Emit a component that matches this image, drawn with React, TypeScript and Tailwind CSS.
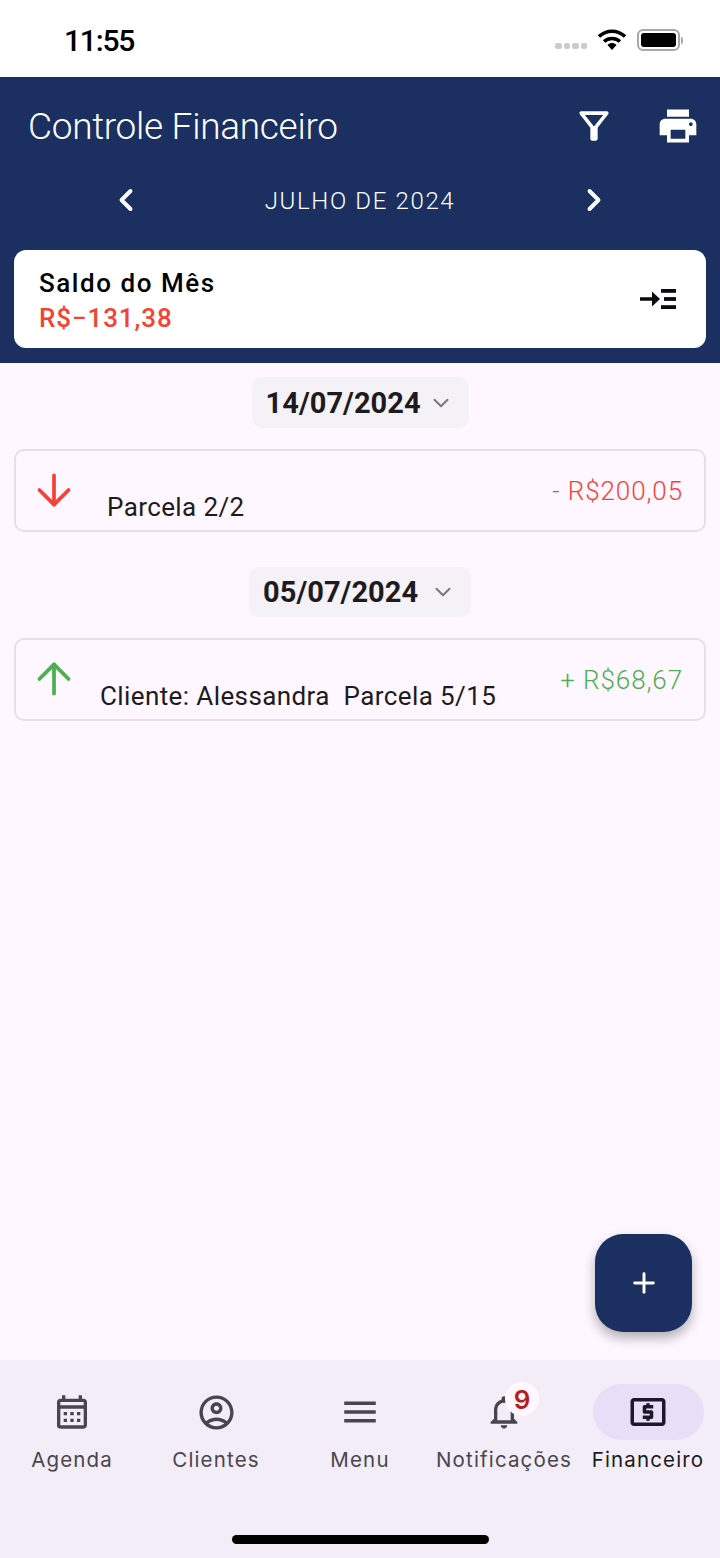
import { ArrowDown, ArrowUp, ChevronDown, ChevronLeft, ChevronRight, Plus } from "lucide-react";
import {
  MdMenu,
  MdOutlineAccountCircle,
  MdOutlineCalendarMonth,
  MdOutlineFilterAlt,
  MdOutlineLocalAtm,
  MdOutlineNotifications,
  MdPrint,
} from "react-icons/md";

function StatusBar() {
  return (
    <div className="h-[77px] shrink-0 bg-white flex items-center justify-between pl-[64px] pr-[37px] pt-[3px]">
      <span className="text-[30px] font-medium text-black tracking-[-1.2px] font-['Roboto',sans-serif]">11:55</span>
      <div className="flex items-center">
        <div className="flex gap-[2px] mt-[12px] mr-[11px]">
          <span className="w-[6.5px] h-[6px] rounded-[2px] bg-[#cccccc]" />
          <span className="w-[6.5px] h-[6px] rounded-[2px] bg-[#cccccc]" />
          <span className="w-[6.5px] h-[6px] rounded-[2px] bg-[#cccccc]" />
          <span className="w-[6.5px] h-[6px] rounded-[2px] bg-[#cccccc]" />
        </div>
        <svg width="28" height="22" viewBox="0 0 28 22" className="mr-[11px]">
          <path d="M1 7.5 C8.5 0.5 19.5 0.5 27 7.5" fill="none" stroke="#000" strokeWidth="3.4" />
          <path d="M6 12.5 C10.5 8.5 17.5 8.5 22 12.5" fill="none" stroke="#000" strokeWidth="3.4" />
          <path d="M9.5 16 C12.5 13.4 15.5 13.4 18.5 16 L14 21 Z" fill="#000" />
        </svg>
        <div className="w-[43px] h-[22px] rounded-[6px] border-2 border-[#a8a8a8] p-[2px]">
          <div className="w-full h-full rounded-[3px] bg-black" />
        </div>
        <div className="w-[2px] h-[7px] ml-[1px] rounded-r-sm bg-[#a8a8a8]" />
      </div>
    </div>
  );
}

function Header() {
  return (
    <header className="shrink-0 bg-[#1b3060] pb-[15px] text-white font-['Roboto',sans-serif]">
      <div className="h-[98px] flex items-center justify-between pl-[28px] pr-[20px]">
        <h1 className="text-[37px] font-light tracking-[-0.3px] pt-[2px]">Controle Financeiro</h1>
        <div className="flex items-center gap-[40px]">
          <MdOutlineFilterAlt size={44} />
          <MdPrint size={44} />
        </div>
      </div>
      <div className="h-[50px] flex items-center justify-between px-[108px]">
        <ChevronLeft size={36} strokeWidth={2.6} />
        <span className="text-[24px] font-light tracking-[1.65px] pt-[1px]">JULHO DE 2024</span>
        <ChevronRight size={36} strokeWidth={2.6} />
      </div>
      <div className="mt-[25px] mx-[14px] h-[98px] rounded-[12px] bg-white flex items-center justify-between pl-[25px] pr-[30px]">
        <div className="flex flex-col gap-[3px] pt-[2px]">
          <span className="text-[26px] leading-[32px] font-medium tracking-[1.55px] text-black">Saldo do Mês</span>
          <span className="text-[26px] leading-[32px] font-medium tracking-[0.9px] text-[#f44336]">R$−131,38</span>
        </div>
        <svg width="36" height="24" viewBox="0 0 36 24" fill="#0b0b12">
          <path d="M0 10.2h12V4.5l8 7.5-8 7.5v-5.7H0z" />
          <rect x="21" y="2" width="15" height="3.8" />
          <rect x="24" y="10.1" width="12" height="3.8" />
          <rect x="21" y="18.2" width="15" height="3.8" />
        </svg>
      </div>
    </header>
  );
}

function DateChip({ date, width, height }: { date: string; width: string; height: string }) {
  return (
    <div className={`${width} ${height} rounded-[10px] bg-[#f5f2f7] flex items-center justify-between pl-[14px] pr-[15px] font-['Roboto',sans-serif]`}>
      <span className="text-[29px] font-bold tracking-[0.05px] pt-[2px] text-[#1d1b20]">{date}</span>
      <ChevronDown size={26} strokeWidth={1.8} className="text-[#79747e]" />
    </div>
  );
}

function Entry({ up, text, amount, textLeft }: { up: boolean; text: string; amount: string; textLeft: string }) {
  const color = up ? "text-[#4caf50]" : "text-[#f44336]";
  return (
    <div className="mx-[14px] h-[83px] rounded-[10px] border-2 border-[#e4e1e6] flex justify-between pl-[13px] pr-[21px] font-['Roboto',sans-serif]">
      <div className="flex">
        <div className={`pt-[14px] ${color}`}>
          {up ? <ArrowUp size={50} strokeWidth={1.8} /> : <ArrowDown size={50} strokeWidth={1.8} />}
        </div>
        <span className={`${textLeft} pt-[40px] text-[26px] leading-[32px] tracking-[0.4px] text-[#1d1b20] whitespace-pre`}>{text}</span>
      </div>
      <span className={`pt-[24px] text-[26px] leading-[32px] font-light tracking-[0.9px] ${color}`}>{amount}</span>
    </div>
  );
}

function TabItem({ icon, label, active }: { icon: React.ReactNode; label: string; active?: boolean }) {
  return (
    <div className="w-[144px] flex flex-col items-center">
      <div className={`w-[111px] h-[56px] rounded-full flex items-center justify-center ${active ? "bg-[#e8def8] text-[#1d192b]" : "text-[#49454f]"}`}>
        {icon}
      </div>
      <span className={`mt-[2px] text-[20.5px] leading-[36px] tracking-[1.15px] whitespace-nowrap ${active ? "text-[#1d1b20]" : "text-[#49454f]"}`}>{label}</span>
    </div>
  );
}

export default function App() {
  return (
    <div className="relative w-[720px] h-[1558px] flex flex-col overflow-hidden bg-[#fef7ff] font-['Inter',sans-serif]">
      <StatusBar />
      <Header />

      <main className="flex-1">
        <div className="flex justify-center pt-[14px] pb-[21px]">
          <DateChip date="14/07/2024" width="w-[217px]" height="h-[51px]" />
        </div>
        <Entry up={false} text="Parcela 2/2" amount="- R$200,05" textLeft="pl-[28px]" />
        <div className="flex justify-center pt-[35px] pb-[21px]">
          <DateChip date="05/07/2024" width="w-[222px]" height="h-[50px]" />
        </div>
        <Entry up text="Cliente: Alessandra  Parcela 5/15" amount="+ R$68,67" textLeft="pl-[21px]" />
      </main>

      {/* FAB */}
      <button className="absolute left-[595px] top-[1234px] w-[97px] h-[98px] rounded-[28px] bg-[#1b3060] text-white flex items-center justify-center shadow-[0_6px_12px_rgba(0,0,0,0.3)]">
        <Plus size={32} strokeWidth={2.2} />
      </button>

      {/* Tab bar */}
      <nav className="relative shrink-0 h-[198px] bg-[#f3edf7] pt-[24px] flex">
        <TabItem label="Agenda" icon={<MdOutlineCalendarMonth size={40} />} />
        <TabItem label="Clientes" icon={<MdOutlineAccountCircle size={41} />} />
        <TabItem label="Menu" icon={<MdMenu size={42} />} />
        <TabItem
          label="Notificações"
          icon={
            <div className="relative">
              <MdOutlineNotifications size={40} />
              <span className="absolute left-[21px] top-[-10px] w-[34px] h-[34px] rounded-full bg-[#fef7ff] flex items-center justify-center text-[26px] font-semibold text-[#b71c1c]">9</span>
            </div>
          }
        />
        <TabItem active label="Financeiro" icon={<MdOutlineLocalAtm size={42} />} />
        <div className="absolute left-[232px] top-[175px] w-[257px] h-[9px] rounded-full bg-black" />
      </nav>
    </div>
  );
}
